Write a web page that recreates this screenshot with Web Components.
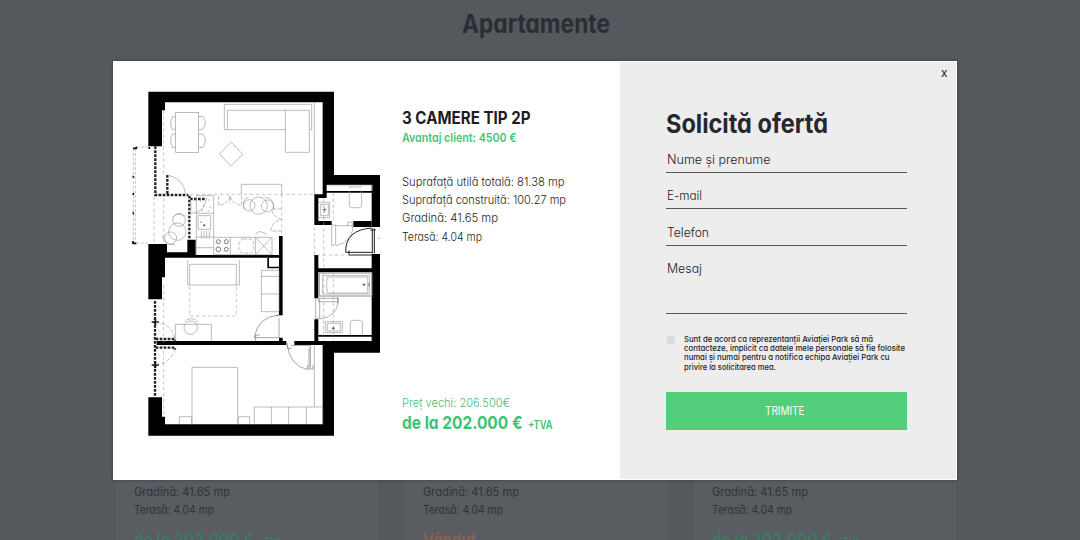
<!DOCTYPE html>
<html lang="ro">
<head>
<meta charset="utf-8">
<title>Apartamente</title>
<style>
html,body{margin:0;height:540px;overflow:hidden;background:#55585d}
body{font-family:Inter,"Liberation Sans",sans-serif;font-feature-settings:"cv11","ss03";color:#2a2c31}
</style>
</head>
<body>
<apartments-page></apartments-page>

<template id="t-page">
<style>
:host{display:block;position:relative;width:1080px;height:540px;overflow:hidden}
header{display:flex;justify-content:center;padding:7.5px 8px 0 0;height:472.5px;box-sizing:border-box;color:#2a2d33}
.cards{display:grid;grid-template-columns:262px 262px 262px;gap:27px;padding-left:116px;height:67px;overflow:hidden}
.edge{height:1px;background:#474549}
offer-modal{position:absolute;left:113px;top:61px}
</style>
<header><fit-text w="148" s="26" lh="32" wt="700">Apartamente</fit-text></header>
<div class="cards">
<apartment-card><fit-text slot="p" w="120" s="18" lh="24" wt="700">de la 202.000 €</fit-text><fit-text slot="p" w="24" s="12" lh="24" wt="600">+TVA</fit-text></apartment-card>
<apartment-card style="--price:#88614f"><fit-text slot="p" w="53" s="18" lh="24" wt="700">Vândut</fit-text></apartment-card>
<apartment-card><fit-text slot="p" w="120" s="18" lh="24" wt="700">de la 202.000 €</fit-text><fit-text slot="p" w="24" s="12" lh="24" wt="600">+TVA</fit-text></apartment-card>
</div>
<div class="edge"></div>
<offer-modal></offer-modal>
</template>

<template id="t-card">
<style>
:host{display:block;background:#595c61;padding:10.5px 0 0 18px;color:#303338}
div{display:flex;gap:5px;align-items:baseline}
.p{color:var(--price,#3f7960);padding-top:8.5px}
</style>
<div><fit-text w="96" s="12" lh="18.2" wt="400">Gradină: 41.65 mp</fit-text></div>
<div><fit-text w="80" s="12" lh="18.2" wt="400">Terasă: 4.04 mp</fit-text></div>
<div class="p"><slot name="p"></slot></div>
</template>

<template id="t-modal">
<style>
:host{display:flex;box-sizing:border-box;width:844px;height:419px;border:1px solid #fff;background:#fff;box-shadow:0 0 3px rgba(20,22,26,.45)}
.left{width:506px;display:flex;box-sizing:border-box;padding:23px 0 0 11px}
floor-plan{flex:none;width:265px;height:355px}
offer-info{margin-left:12px}
offer-form{flex:1}
</style>
<div class="left"><floor-plan></floor-plan><offer-info></offer-info></div>
<offer-form></offer-form>
</template>

<template id="t-info">
<style>
:host{display:flex;flex-direction:column;padding-top:23px;height:329px;color:#1c1e22}
fit-text{display:block}
.g{color:#43c873}
.t{color:#1c1e24}
.specs{margin-top:26px}
.old{margin-top:auto;color:#45bd75}
.price{display:flex;gap:5px;align-items:baseline;color:#3dc470}
</style>
<fit-text class="t" w="128.5" s="17" lh="20" wt="700">3 CAMERE TIP 2P</fit-text>
<fit-text class="g" style="margin-top:1px" w="114.5" s="12.3" lh="18" wt="600">Avantaj client: 4500 €</fit-text>
<div class="specs">
<fit-text w="162.5" s="12" lh="18.2" wt="300">Suprafață utilă totală: 81.38 mp</fit-text>
<fit-text w="164" s="12" lh="18.2" wt="300">Suprafață construită: 100.27 mp</fit-text>
<fit-text w="96" s="12" lh="18.2" wt="300">Gradină: 41.65 mp</fit-text>
<fit-text w="80" s="12" lh="18.2" wt="300">Terasă: 4.04 mp</fit-text>
</div>
<fit-text class="old" w="108" s="12" lh="17" wt="300">Preț vechi: 206.500€</fit-text>
<div class="price"><fit-text w="120.5" s="18" lh="24" wt="700">de la 202.000 €</fit-text><fit-text w="24.5" s="12" lh="24" wt="600">+TVA</fit-text></div>
</template>

<template id="t-form">
<style>
:host{display:block;background:#ededed;color:#202226;margin-left:0}
.x{display:flex;justify-content:flex-end;padding:2px 9px 0 0;height:18px}
form{margin:0;padding:25.5px 0 0 46px;width:241px}
h2{margin:0 0 10px;font:inherit;display:flex;color:#26282d}
form-field{margin-bottom:13.5px}
.consent{display:flex;padding-top:7.5px;height:64px;box-sizing:border-box;gap:9px}
i{width:8px;height:8px;background:#dcdcdc;margin:1px 0 0 1px}
p{margin:0}
p fit-text{display:block}
button{all:unset;display:flex;align-items:center;justify-content:center;box-sizing:border-box;width:241px;height:38px;background:#52ce7b;color:#fff;padding:1px 3px 0 0}
</style>
<div class="x"><fit-text w="6.5" s="11.5" lh="18" wt="400">x</fit-text></div>
<form>
<h2><fit-text w="162" s="26" lh="32" wt="700">Solicită ofertă</fit-text></h2>
<form-field><fit-text w="103.5" s="12.6" lh="18" wt="300">Nume și prenume</fit-text></form-field>
<form-field><fit-text w="35" s="12.6" lh="18" wt="300">E-mail</fit-text></form-field>
<form-field><fit-text w="42" s="12.6" lh="18" wt="300">Telefon</fit-text></form-field>
<form-field style="--h:55px"><fit-text w="35" s="12.6" lh="18" wt="300">Mesaj</fit-text></form-field>
<div class="consent"><i></i><p>
<fit-text w="189" s="7.8" lh="9.2" wt="500">Sunt de acord ca reprezentanții Aviației Park să mă</fit-text>
<fit-text w="221" s="7.8" lh="9.2" wt="500">contacteze, implicit ca datele mele personale să fie folosite</fit-text>
<fit-text w="205.5" s="7.8" lh="9.2" wt="500">numai și numai pentru a notifica echipa Aviației Park cu</fit-text>
<fit-text w="92" s="7.8" lh="9.2" wt="500">privire la solicitarea mea.</fit-text></p></div>
<button type="button"><fit-text w="39.5" s="12.3" lh="18" wt="400">TRIMITE</fit-text></button>
</form>
</template>

<template id="t-plan">
<style>:host{display:block}svg{display:block}</style>
<svg width="265" height="355" viewBox="0 0 795 1065" fill="none" stroke="#9a9a9a" stroke-width="2">
<!-- walls -->
<g fill="#000" stroke="none">
<path d="M70 20H627V270H765V426H740V300H605V339H580V408H620V420H568V328H593V52H120V76H111V184H70Z"/>
<path d="M685 408H740V426H685Z"/>
<path d="M70 477H126V502H187V464H212V510H462V453H473V690H462V518H120V577H111V643H70Z"/>
<path d="M70 937H111V995H120V1018H593V780H508V768H568V703H580V768H740V562H580V640H568V510H580V550H740V507H765V803H627V1052H70Z"/>
<path d="M95 768H462V758H473V768H484V780H95Z"/>
<path d="M603 318H742V323H603ZM580 750H742V755H580ZM427 518H432V545H462V550H427Z"/>
</g>
<!-- windows and balcony -->
<g stroke="#222" stroke-width="7" stroke-dasharray="8 4">
<path d="M91 184V330H190M127 270V328M193 332V462M195 342H244M90 648V937M92 762H150V768M92 788H150V794"/>
</g>
<g stroke="#aaa" stroke-width="2" stroke-dasharray="9 5">
<path d="M34 186H70M34 474H70M25 190V474M31 190V474" />
</g>
<path d="M24 190H34V185M25 272V278M25 324V330M25 382V388M24 468V475H34M73 186V192M80 711H102M91 702V720M80 840H102M91 830V850" stroke="#111" stroke-width="5"/>
<path d="M116 76V270M116 340V470M87 335V474M116 600V995M195 328H568M596 340V545M625 323V408M470 328V450M568 427V510H660M596 562V765M625 562V765M194 604V693H334V604" stroke="#a9a9a9" stroke-dasharray="10 8"/>
<!-- living room -->
<rect x="152" y="82" width="69" height="120"/>
<path d="M152 95h-10q-10 19 0 38h10M152 147h-10q-10 20 0 40h10M221 95h12q16 19 0 38h-12M221 147h12q16 20 0 40h-12"/>
<path d="M298 58H560V134H553V76H307V134H298ZM307 134H481M481 76V202H553V134M568 52V328M319 171L353 208L317 243L283 207ZM349 328V298H470V328" />
<path d="M127 270Q175 280 182 325M196 342Q200 375 196 386Q242 380 242 345"/>
<!-- kitchen and dining -->
<path d="M214 332H266V456M214 332V510M214 385H266M214 456H266M214 488H266M219 392H257V433H219ZM229 438V461M237 438V461M245 438V461M253 438V461M266 457H441V509H266ZM316 457V509M391 457V509M391 457L441 509M441 457L391 509"/>
<g stroke="#777" stroke-width="3"><circle cx="280" cy="470" r="6"/><circle cx="304" cy="470" r="6"/><circle cx="280" cy="493" r="7"/><circle cx="304" cy="493" r="6"/></g>
<path d="M226 410l4 3M238 417v6M234 422h7" stroke="#555" stroke-width="3"/>
<path d="M225 348h3M250 345h3M234 362h3M254 366h3M230 377h3M248 379h3" stroke="#777" stroke-width="3"/>
<rect x="342" y="462" width="44" height="42" rx="14" stroke-dasharray="10 5"/>
<path d="M281 333V361Q312 356 315 332V355M350 332V361Q320 356 315 332M470 372H440Q444 397 470 403M470 438H438Q440 410 470 403" stroke-dasharray="12 4"/>
<circle cx="401" cy="362" r="26"/><circle cx="373" cy="361" r="17"/><circle cx="427" cy="363" r="18"/><path d="M358 374Q348 346 370 336M446 374Q450 340 420 336M392 448Q400 432 425 448"/>
<circle cx="157" cy="440" r="26"/><circle cx="162" cy="405" r="19"/><circle cx="137" cy="459" r="18"/><path d="M143 398Q156 378 181 393M113 452Q116 484 150 478"/>
<!-- bathroom, upper -->
<path d="M580 352H614V398H580ZM587 358H610V392H587ZM673 318V362Q673 368 680 368H704Q710 368 710 360V318M605 300H742V318M670 306H710"/>
<path d="M592 374H604M599 367V381" stroke="#444"/>
<path d="M620 420V483L632 478V420ZM632 483Q682 470 685 422H630M668 422V412H682V428"/>
<g stroke="#222" stroke-width="3"><path d="M662 502Q660 435 740 429M662 502H742M670 510H742M742 430V505M748 430V505M672 496V508M736 435H752"/></g>
<path d="M760 460h5" stroke="#777"/>
<!-- bedroom, upper -->
<path d="M188 525V600H343V525M194 538H334V600M194 538V600M409 556H462V680H409V556M409 574H462M409 627H462M151 768V718H259V768"/>
<circle cx="197" cy="728" r="20"/><path d="M180 710Q184 700 198 701Q216 702 217 713"/>
<path d="M462 690Q400 695 388 755V758H462M462 700V758M452 692H472M392 768V750H404" stroke="#777"/>
<path d="M92 712Q140 715 151 765M92 838Q140 835 151 787" stroke-dasharray="12 5"/>
<!-- bathroom, lower -->
<rect x="583" y="564" width="157" height="69" stroke="#aaa" stroke-width="4"/>
<path d="M593 572H733V627H593ZM607 576Q602 600 607 624M607 576H728V624H607M601 710H652V743H601ZM607 715H646V738H607ZM676 750V712Q677 706 684 706H706Q712 706 712 712V750"/>
<path d="M712 599h10M717 594v10M732 594v10M620 730h10M625 725v10" stroke="#333"/>
<path d="M580 640H640V650H580ZM572 640V700H584V640M640 650Q635 695 584 702M638 636V656" stroke="#888"/>
<!-- bedroom, lower -->
<path d="M201 1018V847H338V1018M163 1018V995H200V1018M340 1018V995H374V1018M388 1018V966H593V1018M439 966V1018M491 966V1018M544 966V1018M568 781V966"/>
<path d="M487 781Q495 842 548 854M498 781H556V850M487 774V790H500M548 840V852H564V840M552 790V848" stroke="#777"/>
</svg>
</template>

<script>
const base = (id) => class extends HTMLElement {
  constructor() {
    super();
    this.attachShadow({ mode: 'open' }).append(document.getElementById(id).content.cloneNode(true));
  }
};
customElements.define('apartments-page', base('t-page'));
customElements.define('apartment-card', base('t-card'));
customElements.define('offer-modal', base('t-modal'));
customElements.define('offer-info', base('t-info'));
customElements.define('offer-form', base('t-form'));
customElements.define('floor-plan', base('t-plan'));
customElements.define('form-field', class extends HTMLElement {
  constructor() {
    super();
    this.attachShadow({ mode: 'open' }).innerHTML =
      '<style>:host{display:block;box-sizing:border-box;height:var(--h,23px);border-bottom:1px solid #55575b;padding:1px 0 0 1px}</style><slot></slot>';
  }
});
// One line of type, condensed or widened to the width given by "w".
customElements.define('fit-text', class extends HTMLElement {
  connectedCallback() {
    if (this.shadowRoot) return;
    const a = (n) => this.getAttribute(n);
    this.attachShadow({ mode: 'open' }).innerHTML =
      `<style>:host{display:inline-block;vertical-align:top;flex:none;width:${a('w')}px;height:${a('lh')}px;font-size:${a('s')}px;line-height:${a('lh')}px;font-weight:${a('wt')}}
      span{display:inline-block;vertical-align:top;white-space:nowrap;transform-origin:0 0}</style><span><slot></slot></span>`;
    const s = this.shadowRoot.querySelector('span');
    const w = s.getBoundingClientRect().width;
    if (w) s.style.transform = `scaleX(${a('w') / w})`;
  }
});
</script>
</body>
</html>
